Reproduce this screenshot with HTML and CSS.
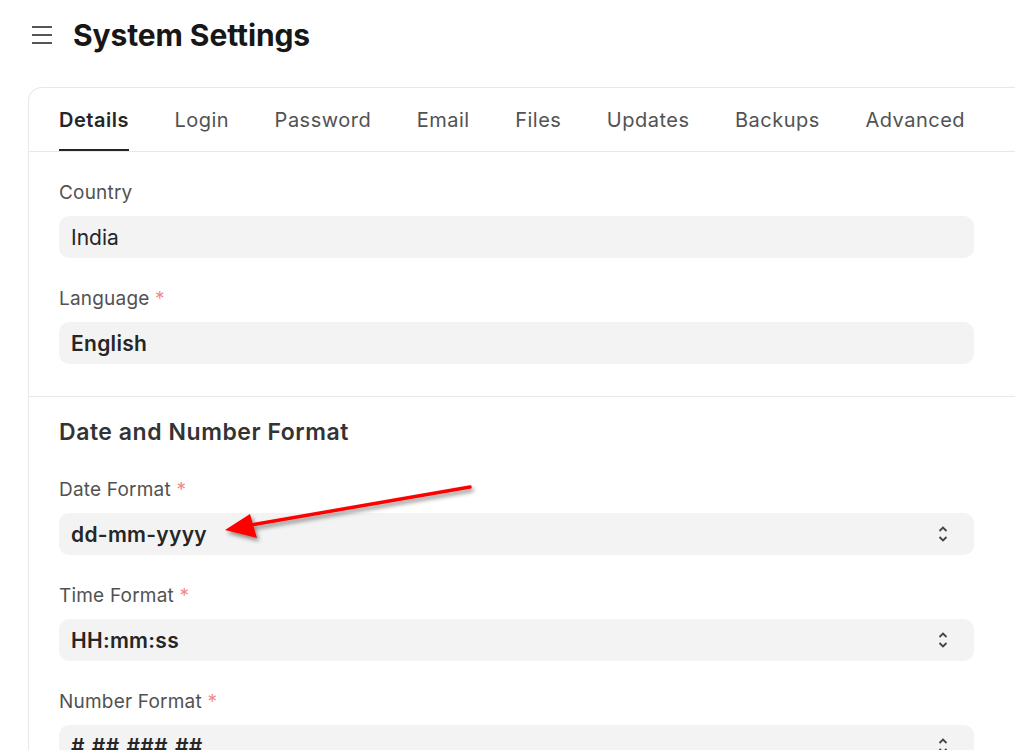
FILE: index.html
```html
<!DOCTYPE html>
<html lang="en">
  <head>
    <meta charset="UTF-8" />
    <meta name="viewport" content="width=device-width, initial-scale=1.0" />
    <title>System Settings</title>
    <link rel="stylesheet" href="styles.css">
  </head>
  <body>
    <header class="page-header">
      <button class="menu-btn" aria-label="Menu">
        <svg width="22" height="20" viewBox="0 0 22 20">
          <path d="M1 2h20M1 10h20M1 18h20" stroke="#555" stroke-width="2" fill="none" />
        </svg>
      </button>
      <h1>System Settings</h1>
    </header>

    <div class="card">
      <nav class="tabs">
        <a class="tab active">Details</a>
        <a class="tab">Login</a>
        <a class="tab">Password</a>
        <a class="tab">Email</a>
        <a class="tab">Files</a>
        <a class="tab">Updates</a>
        <a class="tab">Backups</a>
        <a class="tab">Advanced</a>
      </nav>

      <section class="section first">
        <div class="field">
          <label>Country</label>
          <div class="control">India</div>
        </div>
        <div class="field">
          <label>Language <span class="req">*</span></label>
          <div class="control strong">English</div>
        </div>
      </section>

      <section class="section bordered">
        <h2>Date and Number Format</h2>
        <div class="field">
          <label>Date Format <span class="req">*</span></label>
          <div class="control strong select">
            dd-mm-yyyy
            <svg class="chevrons" width="12" height="20" viewBox="0 0 12 20">
              <path d="M2.5 7l3.5-3.5 3.5 3.5M2.5 13l3.5 3.5 3.5-3.5" stroke="#444" stroke-width="1.8" fill="none" />
            </svg>
          </div>
        </div>
        <div class="field">
          <label>Time Format <span class="req">*</span></label>
          <div class="control strong select">
            HH:mm:ss
            <svg class="chevrons" width="12" height="20" viewBox="0 0 12 20">
              <path d="M2.5 7l3.5-3.5 3.5 3.5M2.5 13l3.5 3.5 3.5-3.5" stroke="#444" stroke-width="1.8" fill="none" />
            </svg>
          </div>
        </div>
        <div class="field">
          <label>Number Format <span class="req">*</span></label>
          <div class="control strong select">
            #,##,###.##
            <svg class="chevrons" width="12" height="20" viewBox="0 0 12 20">
              <path d="M2.5 7l3.5-3.5 3.5 3.5M2.5 13l3.5 3.5 3.5-3.5" stroke="#444" stroke-width="1.8" fill="none" />
            </svg>
          </div>
        </div>
      </section>
    </div>

    <!-- annotation arrow drawn over the screenshot -->
    <svg class="annotation" width="300" height="80" viewBox="0 0 300 80">
      <defs>
        <filter id="shadow" x="-20%" y="-50%" width="140%" height="200%">
          <feDropShadow dx="2" dy="3" stdDeviation="2" flood-color="#000" flood-opacity="0.45" />
        </filter>
      </defs>
      <g filter="url(#shadow)">
        <line x1="270" y1="17" x2="45" y2="56" stroke="#f00" stroke-width="3.5" stroke-linecap="round" />
        <polygon points="25,60 50,44 57,68" fill="#f00" />
      </g>
    </svg>
  </body>
</html>
```

FILE: styles.css
```css
/* Reset styles */
*,
*::before,
*::after {
  margin: 0;
  padding: 0;
  box-sizing: border-box;
}

body {
  font-family: "Inter", "Noto Sans", sans-serif;
  color: #171717;
  background-color: #fff;
  overflow: hidden;
  position: relative;
}

/* Header */
.page-header {
  display: flex;
  align-items: center;
  height: 70px;
  padding-left: 31px;
}

.menu-btn {
  display: flex;
  background: none;
  border: none;
  margin-right: 20px;
}

h1 {
  font-size: 30px;
  font-weight: 700;
  letter-spacing: -0.1px;
}

/* Card */
.card {
  margin: 17px -40px 0 28px;
  border: 1px solid #e8e8e8;
  border-right: none;
  border-bottom: none;
  border-top-left-radius: 14px;
}

.tabs {
  display: flex;
  gap: 45.5px;
  padding: 0 30px;
  height: 64px;
  border-bottom: 1px solid #e8e8e8;
}

.tab {
  display: flex;
  align-items: center;
  font-size: 20px;
  letter-spacing: 0.5px;
  color: #525252;
  border-bottom: 2px solid transparent;
  padding-top: 2px;
}

.tab.active {
  color: #262626;
  font-weight: 600;
  border-bottom-color: #262626;
}

/* Form sections */
.section {
  padding: 27px 30px 33px;
  display: flex;
  flex-direction: column;
  gap: 29px;
}

.section.first {
  padding-top: 29px;
  padding-bottom: 32px;
}

.section.bordered {
  border-top: 1px solid #e8e8e8;
  padding-top: 21px;
}

h2 {
  font-size: 23px;
  font-weight: 600;
  letter-spacing: 0.55px;
  color: #333;
  line-height: 28px;
  margin-bottom: 3px;
}

.field {
  max-width: 915px;
}

.field label {
  display: block;
  font-size: 19px;
  letter-spacing: 0.2px;
  line-height: 24px;
  color: #525252;
  margin-bottom: 11px;
}

.req {
  color: #f08a8a;
}

.control {
  display: flex;
  align-items: center;
  justify-content: space-between;
  height: 42px;
  padding: 0 25px 0 12px;
  background-color: #f3f3f3;
  border-radius: 10px;
  font-size: 21px;
  color: #262626;
}

.control.strong {
  font-weight: 600;
  letter-spacing: 0.3px;
}

.chevrons {
  flex-shrink: 0;
}

/* Overlay arrow */
.annotation {
  position: absolute;
  left: 200px;
  top: 470px;
}
```
